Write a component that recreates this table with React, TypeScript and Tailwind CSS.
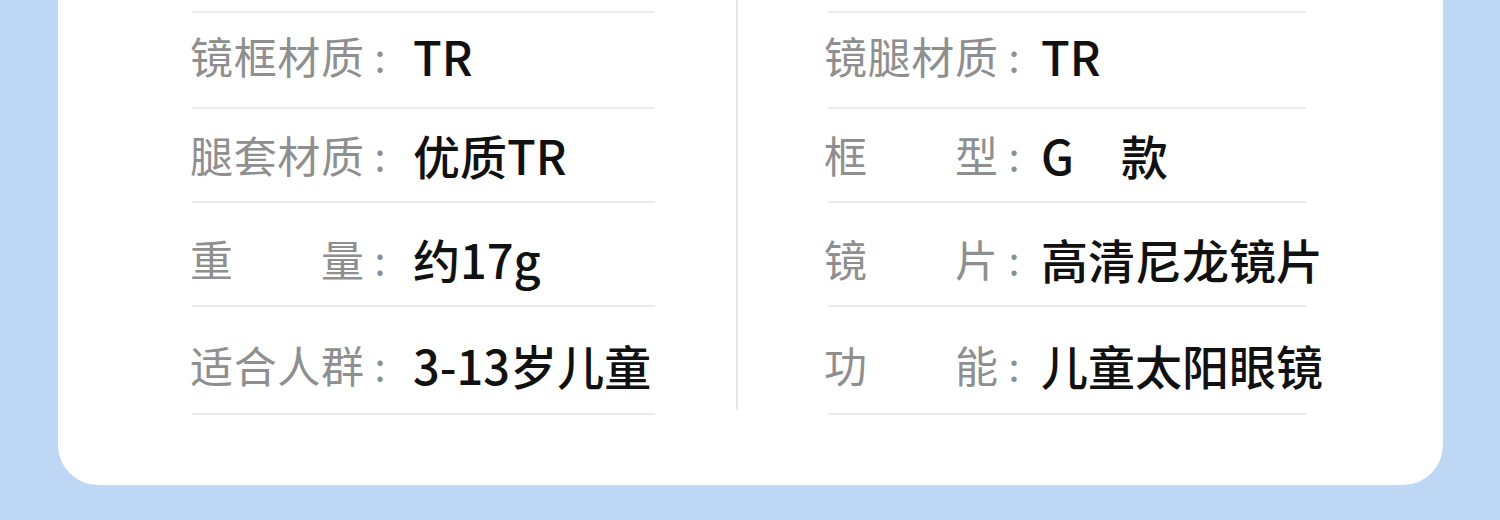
import React from "react";

type Row = { label: string[]; value: string };

const left: Row[] = [
  { label: ["镜", "框", "材", "质"], value: "TR" },
  { label: ["腿", "套", "材", "质"], value: "优质TR" },
  { label: ["重", "量"], value: "约17g" },
  { label: ["适", "合", "人", "群"], value: "3-13岁儿童" },
];

const right: Row[] = [
  { label: ["镜", "腿", "材", "质"], value: "TR" },
  { label: ["框", "型"], value: "G　款" },
  { label: ["镜", "片"], value: "高清尼龙镜片" },
  { label: ["功", "能"], value: "儿童太阳眼镜" },
];

const rowClasses = [
  "h-[94px] pb-[10px]",
  "h-[92px] pb-[2px]",
  "h-[102px] pt-[8px]",
  "h-[106px] pt-[8px]",
];

function Column({
  rows,
  width,
  labelShift,
  colonGap,
}: {
  rows: Row[];
  width: string;
  labelShift: string;
  colonGap: string;
}) {
  return (
    <div className={`flex flex-col ${width} pt-[11px]`}>
      <div className="h-[2px] bg-[#ebebeb]" />
      {rows.map((r, i) => (
        <div key={i} className="flex flex-col">
          <div className={`flex items-center ${rowClasses[i]}`}>
            <div
              className={`flex w-[174px] shrink-0 justify-between ${labelShift} text-[43px] leading-none text-[#8f8f8f]`}
            >
              {r.label.map((c, j) => (
                <span key={j}>{c}</span>
              ))}
            </div>
            <div className="w-[32px] shrink-0 text-center text-[40px] leading-none text-[#8f8f8f]">:</div>
            <div
              className={`${colonGap} shrink-0 whitespace-pre text-[47px] font-medium leading-none text-[#111111]`}
            >
              {r.value}
            </div>
          </div>
          <div className="h-[2px] bg-[#ebebeb]" />
        </div>
      ))}
    </div>
  );
}

export default function App() {
  return (
    <div
      className="h-[520px] w-[1500px] overflow-hidden bg-[#bdd7f5] pl-[58px]"
      style={{ fontFamily: '"Noto Sans CJK SC", "Noto Sans", sans-serif' }}
    >
      <div className="flex h-[485px] w-[1385px] rounded-b-[40px] bg-white pl-[134px]">
        <Column rows={left} width="w-[463px]" labelShift="-ml-[2px]" colonGap="ml-[17px]" />
        <div className="ml-[81px] mr-[90px] h-[410px] w-[2px] bg-[#e6e6e6]" />
        <Column rows={right} width="w-[478px]" labelShift="-ml-[4px]" colonGap="ml-[11px]" />
      </div>
    </div>
  );
}
